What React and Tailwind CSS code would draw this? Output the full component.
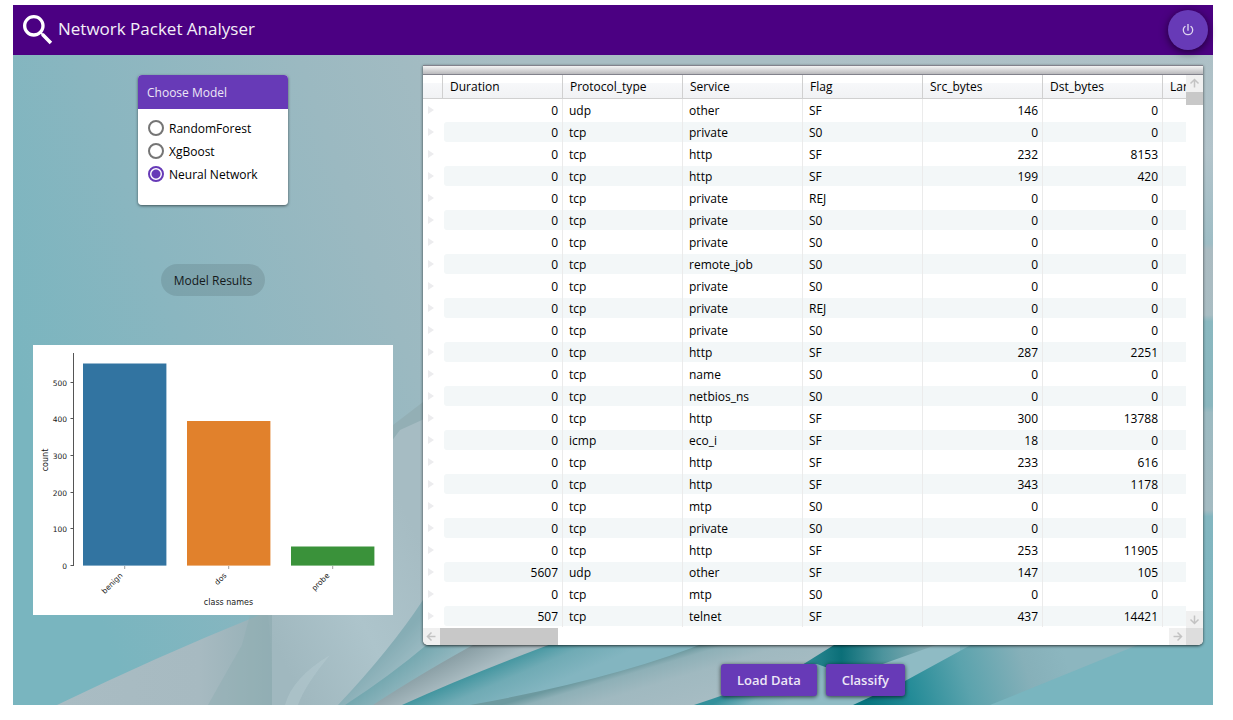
import { useState } from "react";

const models = ["RandomForest", "XgBoost", "Neural Network"];

const columns = [
  { name: "Duration", numeric: true },
  { name: "Protocol_type" },
  { name: "Service" },
  { name: "Flag" },
  { name: "Src_bytes", numeric: true },
  { name: "Dst_bytes", numeric: true },
  { name: "Land" },
];

const packets = [
  [0, "udp", "other", "SF", 146, 0],
  [0, "tcp", "private", "S0", 0, 0],
  [0, "tcp", "http", "SF", 232, 8153],
  [0, "tcp", "http", "SF", 199, 420],
  [0, "tcp", "private", "REJ", 0, 0],
  [0, "tcp", "private", "S0", 0, 0],
  [0, "tcp", "private", "S0", 0, 0],
  [0, "tcp", "remote_job", "S0", 0, 0],
  [0, "tcp", "private", "S0", 0, 0],
  [0, "tcp", "private", "REJ", 0, 0],
  [0, "tcp", "private", "S0", 0, 0],
  [0, "tcp", "http", "SF", 287, 2251],
  [0, "tcp", "name", "S0", 0, 0],
  [0, "tcp", "netbios_ns", "S0", 0, 0],
  [0, "tcp", "http", "SF", 300, 13788],
  [0, "icmp", "eco_i", "SF", 18, 0],
  [0, "tcp", "http", "SF", 233, 616],
  [0, "tcp", "http", "SF", 343, 1178],
  [0, "tcp", "mtp", "S0", 0, 0],
  [0, "tcp", "private", "S0", 0, 0],
  [0, "tcp", "http", "SF", 253, 11905],
  [5607, "udp", "other", "SF", 147, 105],
  [0, "tcp", "mtp", "S0", 0, 0],
  [507, "tcp", "telnet", "SF", 437, 14421],
];

function Backdrop() {
  return (
    <svg
      className="absolute inset-0 h-full w-full"
      viewBox="13 55 1200 650"
      preserveAspectRatio="none"
      aria-hidden="true"
    >
      <defs>
        <linearGradient id="base" gradientUnits="userSpaceOnUse" x1="13" y1="380" x2="560" y2="180">
          <stop offset="0" stopColor="#79b5bf" />
          <stop offset="0.3" stopColor="#8ab6c0" />
          <stop offset="0.65" stopColor="#9bb9c1" />
          <stop offset="1" stopColor="#a8bdc3" />
        </linearGradient>
        <linearGradient id="wedge" gradientUnits="userSpaceOnUse" x1="60" y1="0" x2="275" y2="0">
          <stop offset="0" stopColor="#a9bcc3" />
          <stop offset="0.65" stopColor="#a7bac1" />
          <stop offset="1" stopColor="#93afb5" />
        </linearGradient>
        <linearGradient id="sheet" gradientUnits="userSpaceOnUse" x1="272" y1="640" x2="430" y2="560">
          <stop offset="0" stopColor="#a0b8bf" />
          <stop offset="0.5" stopColor="#adc4cb" />
          <stop offset="1" stopColor="#a6bcc3" />
        </linearGradient>
        <linearGradient id="foldA" gradientUnits="userSpaceOnUse" x1="382" y1="655" x2="402" y2="675">
          <stop offset="0" stopColor="#86adb5" />
          <stop offset="1" stopColor="#9dbcc4" />
        </linearGradient>
        <linearGradient id="foldB" gradientUnits="userSpaceOnUse" x1="393" y1="671" x2="408" y2="691">
          <stop offset="0" stopColor="#75a8b0" />
          <stop offset="1" stopColor="#92b7bf" />
        </linearGradient>
        <linearGradient id="foldC" gradientUnits="userSpaceOnUse" x1="430" y1="668" x2="441" y2="690">
          <stop offset="0" stopColor="#8a9fa5" />
          <stop offset="1" stopColor="#a9bbc1" />
        </linearGradient>
        <linearGradient id="teal" gradientUnits="userSpaceOnUse" x1="480" y1="666" x2="498" y2="708">
          <stop offset="0" stopColor="#37909a" />
          <stop offset="0.5" stopColor="#70abb5" />
          <stop offset="1" stopColor="#83b5c0" />
        </linearGradient>
        <linearGradient id="grey" gradientUnits="userSpaceOnUse" x1="597" y1="676" x2="615" y2="736">
          <stop offset="0" stopColor="#6c999f" />
          <stop offset="0.12" stopColor="#8eb0b7" />
          <stop offset="0.4" stopColor="#a0b9c0" />
          <stop offset="1" stopColor="#a8bdc4" />
        </linearGradient>
        <linearGradient id="deep" gradientUnits="userSpaceOnUse" x1="805" y1="650" x2="935" y2="650">
          <stop offset="0" stopColor="#2f8b95" />
          <stop offset="0.28" stopColor="#0b6f78" />
          <stop offset="0.6" stopColor="#4d949d" />
          <stop offset="1" stopColor="#8eb1b8" />
        </linearGradient>
        <linearGradient id="under" gradientUnits="userSpaceOnUse" x1="765" y1="672" x2="785" y2="705">
          <stop offset="0" stopColor="#33909b" />
          <stop offset="0.5" stopColor="#7db3bd" />
          <stop offset="1" stopColor="#8fbbc4" />
        </linearGradient>
        <linearGradient id="ocean" gradientUnits="userSpaceOnUse" x1="865" y1="700" x2="1060" y2="640">
          <stop offset="0" stopColor="#08757f" />
          <stop offset="0.22" stopColor="#238b97" />
          <stop offset="0.5" stopColor="#5ba3ad" />
          <stop offset="0.8" stopColor="#86b0b9" />
          <stop offset="1" stopColor="#8cb6bf" />
        </linearGradient>
        <linearGradient id="edge" gradientUnits="userSpaceOnUse" x1="0" y1="55" x2="0" y2="705">
          <stop offset="0" stopColor="#adc0c6" />
          <stop offset="0.15" stopColor="#b3c4cb" />
          <stop offset="0.29" stopColor="#9ebdc5" />
          <stop offset="0.3" stopColor="#abbbc1" />
          <stop offset="0.4" stopColor="#a9bdc3" />
          <stop offset="0.41" stopColor="#8ab8c0" />
          <stop offset="0.54" stopColor="#8ab6be" />
          <stop offset="0.55" stopColor="#9cbac1" />
          <stop offset="0.7" stopColor="#a4bbc2" />
          <stop offset="0.71" stopColor="#83b6c0" />
          <stop offset="1" stopColor="#79b5bf" />
        </linearGradient>
      </defs>
      <rect x="13" y="55" width="1200" height="650" fill="url(#base)" />
      <rect x="800" y="55" width="413" height="650" fill="url(#edge)" />
      <path d="M57 705Q160 655 262 614Q340 500 393 425L423 402L620 300V705Z" fill="url(#wedge)" />
      <path d="M208 705Q222 680 242 645L250 615H268Q273 660 272 705Z" fill="#8fadb2" opacity="0.45" />
      <path d="M272 600L400 430L620 330V705H272Z" fill="url(#sheet)" />
      <path d="M285 705Q292 678 330 655Q305 685 298 705Z" fill="#bdd0d6" opacity="0.35" />
      <path d="M338 705Q390 650 423 600L620 500V705Z" fill="url(#foldA)" />
      <path d="M345 705Q390 676 430 642L620 560V705Z" fill="url(#foldB)" />
      <path d="M373 705Q420 674 482 640H620V705Z" fill="url(#foldC)" />
      <path d="M402 705Q470 674 562 640H900V705Z" fill="url(#teal)" />
      <path d="M470 705Q620 678 712 640H850V705Z" fill="url(#grey)" />
      <path d="M694 705Q770 680 817 658L842 640H960V705Z" fill="url(#under)" />
      <path d="M802 665L842 640H950L866 670Q835 672 817 664Z" fill="url(#deep)" />
      <path d="M853 705L905 681L980 640H1213V705Z" fill="url(#ocean)" />
      <path d="M990 705L1150 640H1213V705Z" fill="#79b5bf" />
    </svg>
  );
}

function Arrow({ direction }) {
  const turn = {
    up: "rotate-0",
    right: "rotate-90",
    down: "rotate-180",
    left: "-rotate-90",
  }[direction];
  return (
    <svg viewBox="0 0 17 17" className={`block size-[17px] ${turn}`} aria-hidden="true">
      <path d="M8.500 12.500V5M4.500 8.500L8.500 4.500L12.500 8.500" fill="none" stroke="#c3c3c3" strokeWidth="1.500" />
    </svg>
  );
}

function ScrollButton({ direction }) {
  return (
    <button type="button" aria-label={`Scroll ${direction}`} className="size-[17px] shrink-0 bg-[#f0f0f0]">
      <Arrow direction={direction} />
    </button>
  );
}

function ModelPicker() {
  const [model, setModel] = useState("Neural Network");
  return (
    <fieldset className="w-[150px] rounded-[4px] bg-white pb-5 shadow-[0_1px_3px_rgba(0,0,0,0.55)]">
      <div className="flex h-[34px] items-center rounded-t-[4px] bg-[#673ab7] px-[9px] pt-[2px] text-xs text-[#ede7f6]">
        Choose Model
      </div>
      <div className="px-[10px] pt-[7px]">
        {models.map((name) => (
          <label key={name} className="flex h-[23px] items-center gap-[5px] text-xs text-black">
            <input
              type="radio"
              name="model"
              checked={model === name}
              onChange={() => setModel(name)}
              className="size-4 shrink-0 appearance-none rounded-full border-2 border-[#757575] bg-white checked:border-[#673ab7] checked:bg-[radial-gradient(circle,#673ab7_0_4px,#ffffff_5px)]"
            />
            <span className="pt-[2px]">{name}</span>
          </label>
        ))}
      </div>
    </fieldset>
  );
}

const ticks = [
  { value: 500, y: 38 },
  { value: 400, y: 74 },
  { value: 300, y: 111 },
  { value: 200, y: 148 },
  { value: 100, y: 184 },
  { value: 0, y: 221 },
];

const bars = [
  { name: "benign", x: 50, top: 18.5, color: "#3274a1", labelX: 90 },
  { name: "dos", x: 154, top: 76, color: "#e1812c", labelX: 194 },
  { name: "probe", x: 258, top: 201.5, color: "#3a923a", labelX: 297 },
];

function ResultsChart() {
  return (
    <svg
      viewBox="0 0 360 270"
      className="block w-full bg-white"
      role="img"
      aria-label="Count of packets by class"
      fontFamily='"DejaVu Sans", sans-serif'
      fill="#1a1a1a"
    >
      <path d="M40.500 8V221" stroke="#555555" strokeWidth="1" />
      {ticks.map((t) => (
        <g key={t.value}>
          <path d={`M37.500 ${t.y - 0.5}H40.500`} stroke="#555555" strokeWidth="1" />
          <text x="34" y={t.y + 2.5} textAnchor="end" fontSize="7.500">
            {t.value}
          </text>
        </g>
      ))}
      {bars.map((b) => (
        <g key={b.name}>
          <rect x={b.x} y={b.top} width="83.400" height={220.6 - b.top} fill={b.color} />
          <path d={`M${b.x + 41.7} 221V224`} stroke="#888888" strokeWidth="0.800" />
          <text
            textAnchor="end"
            fontSize="7.500"
            transform={`translate(${b.labelX} 231) rotate(-45)`}
          >
            {b.name}
          </text>
        </g>
      ))}
      <text x="195.500" y="260" textAnchor="middle" fontSize="8">
        class names
      </text>
      <text textAnchor="middle" fontSize="8" transform="translate(15 115) rotate(-90)">
        count
      </text>
    </svg>
  );
}

function PacketTable() {
  return (
    <table className="w-[860px] table-fixed border-separate border-spacing-0 text-xs text-black">
      <colgroup>
        <col className="w-5" />
        {columns.map((c) => (
          <col key={c.name} className="w-[120px]" />
        ))}
      </colgroup>
      <thead>
        <tr className="h-6">
          <td className="border-r border-b border-[#d0d0d0] bg-[linear-gradient(#ffffff_8px,#f7f8fa_8px,#f1f2f4)] p-0" />
          {columns.map((c) => (
            <th
              key={c.name}
              scope="col"
              className="border-r border-b border-[#d0d0d0] bg-[linear-gradient(#ffffff_8px,#f7f8fa_8px,#f1f2f4)] py-0 pr-0 pl-[7px] text-left font-normal leading-[22px]"
            >
              {c.name}
            </th>
          ))}
        </tr>
      </thead>
      <tbody>
        {packets.map((row, r) => {
          const band = r % 2 ? "bg-[#f3f7f8]" : "bg-white";
          return (
            <tr key={r} className="h-[22px]">
              <td className="p-0 pl-[5px]">
                <svg viewBox="0 0 6 10" className="block h-[10px] w-[6px]" aria-hidden="true">
                  <path d="M0 1L6 5L0 9Z" fill="#ececee" />
                </svg>
              </td>
              {columns.map((c, i) => (
                <td
                  key={c.name}
                  className={`border-r border-[#ebebeb] p-0 pt-px pb-px ${i === 0 ? "pl-[1px]" : ""}`}
                >
                  <div
                    className={`h-5 leading-[22px] ${band} ${i === 0 ? "rounded-l-[3px]" : ""} ${
                      c.numeric ? "pr-1 text-right" : "pl-[6px]"
                    }`}
                  >
                    {row[i]}
                  </div>
                </td>
              ))}
            </tr>
          );
        })}
      </tbody>
    </table>
  );
}

function PacketGrid() {
  return (
    <section className="overflow-hidden rounded-b-[5px] bg-white shadow-[0_1px_3px_rgba(0,0,0,0.7)]">
      <div className="h-[10px] border-t border-b border-[#82828c] bg-[linear-gradient(#f4f4f4,#b9b9bc)]" />
      <div className="grid grid-cols-[minmax(0,1fr)_17px]">
        <div className="overflow-hidden pb-px">
          <PacketTable />
        </div>
        <div className="flex flex-col">
          <ScrollButton direction="up" />
          <div className="h-[13px] bg-[#c8c8c8]" />
          <div className="flex-1" />
          <ScrollButton direction="down" />
        </div>
        <div className="flex">
          <ScrollButton direction="left" />
          <div className="w-[118px] bg-[#c8c8c8]" />
          <div className="flex-1" />
          <ScrollButton direction="right" />
        </div>
        <div className="bg-[#dddddd]" />
      </div>
    </section>
  );
}

function ActionButton({ children }) {
  return (
    <button
      type="button"
      className="h-8 rounded-[3px] bg-[#673ab7] px-4 pt-[2px] text-[13px] font-semibold text-[#ede7f6] shadow-[0_1px_4px_rgba(0,0,0,0.7)]"
    >
      {children}
    </button>
  );
}

export default function App() {
  return (
    <div className='flex min-h-screen flex-col bg-white pt-[5px] pr-5 pb-[15px] pl-[13px] font-["Open_Sans","Noto_Sans",sans-serif]'>
      <header className="relative z-10 flex h-[50px] items-center bg-[#4b0082] px-[5px]">
        <svg viewBox="0 0 24 24" className="size-10 shrink-0" fill="#ffffff" aria-hidden="true">
          <path d="M9.500,3A6.500,6.500 0 0,1 16,9.500C16,11.110 15.410,12.590 14.440,13.730L14.710,14H15.500L20.500,19L19,20.500L14,15.500V14.710L13.730,14.440C12.590,15.410 11.110,16 9.500,16A6.500,6.500 0 0,1 3,9.500A6.500,6.500 0 0,1 9.500,3M9.500,5C7,5 5,7 5,9.500C5,12 7,14 9.500,14C12,14 14,12 14,9.500C14,7 12,5 9.500,5Z" />
        </svg>
        <h1 className="pb-[2px] text-[17px] leading-6 text-[#f3eff7]">Network Packet Analyser</h1>
        <button
          type="button"
          aria-label="Close application"
          className="ml-auto flex size-10 shrink-0 items-center justify-center rounded-full bg-[#673ab7] shadow-[0_2px_8px_rgba(0,0,0,0.6)]"
        >
          <svg viewBox="0 0 24 24" className="size-4" fill="#ded5ef" aria-hidden="true">
            <path d="M16.560,5.440L15.110,6.890C16.840,7.940 18,9.830 18,12A6,6 0 0,1 12,18A6,6 0 0,1 6,12C6,9.830 7.160,7.940 8.880,6.880L7.440,5.440C5.360,6.880 4,9.280 4,12A8,8 0 0,0 12,20A8,8 0 0,0 20,12C20,9.280 18.640,6.880 16.560,5.440M13,3H11V13H13" />
          </svg>
        </button>
      </header>
      <div className="relative flex flex-1 flex-col overflow-hidden">
        <Backdrop />
        <main className="relative flex gap-[10px] pr-[10px]">
          <div className="flex w-[400px] shrink-0 flex-col items-center px-5 pt-5">
            <ModelPicker />
            <h2 className="mt-[59px] flex h-8 items-center rounded-full bg-black/10 px-[13px] pt-[2px] text-xs text-[#14191b]">
              Model Results
            </h2>
            <div className="mt-[49px] w-full">
              <ResultsChart />
            </div>
          </div>
          <div className="min-w-0 flex-1 pt-[10px]">
            <PacketGrid />
            <div className="mt-[19px] flex justify-center gap-[9px]">
              <ActionButton>Load Data</ActionButton>
              <ActionButton>Classify</ActionButton>
            </div>
          </div>
        </main>
      </div>
    </div>
  );
}
